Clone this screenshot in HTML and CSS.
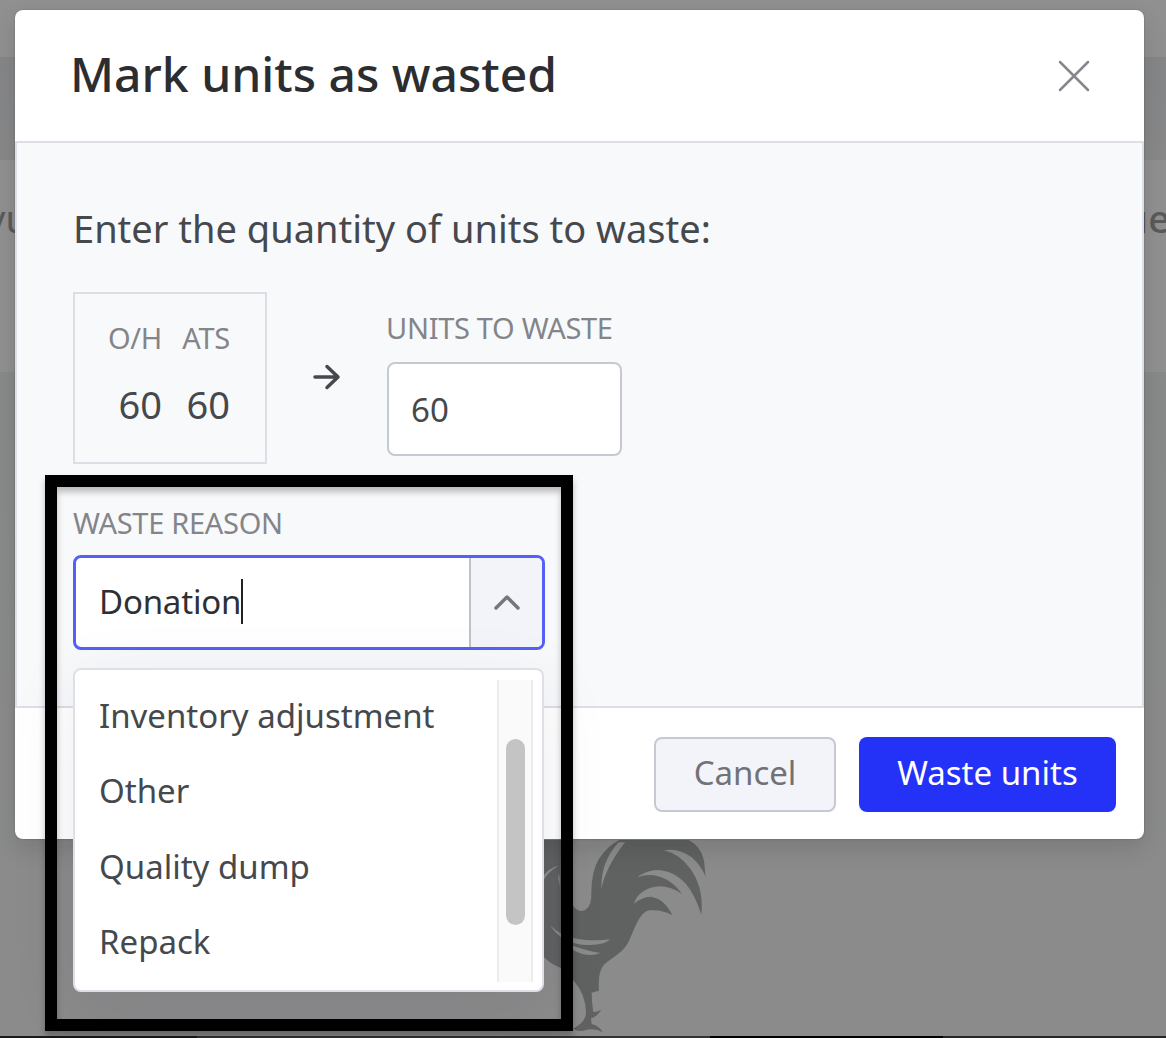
FILE: index.html
```
<!DOCTYPE html>
<html lang="en">
<head>
    <meta charset="UTF-8">
    <meta name="viewport" content="width=device-width, initial-scale=1.0">
    <title>Mark units as wasted</title>
    <link rel="stylesheet" href="styles.css">
</head>
<body>

<div class="page">
    <div class="page-top"></div>
    <div class="page-toolbar"></div>
    <div class="page-table">
        <span class="cell-left">yu</span>
        <span class="cell-right">ue</span>
    </div>
    <div class="page-gap"></div>
    <div class="page-main"></div>
    <div class="page-bottom">
        <div class="bottom-one"></div>
        <div class="bottom-two"></div>
        <div class="bottom-three"></div>
        <div class="bottom-four"></div>
    </div>
    <svg class="rooster" viewBox="0 0 600 654">
        <path fill="#606262" d="M0 60H62Q70 100 80 170Q85 272 125 273Q151 270 154 232Q152 155 178 115Q204 76 238 60H446Q484 80 492 122L497 170Q484 138 455 112Q416 82 372 91Q421 103 452 148C479 187 489 230 484 284Q466 226 438 192Q398 149 347 150Q313 154 292 172Q317 162 342 166Q392 174 426 222Q394 200 356 199C318 202 290 223 282 251Q305 231 332 230Q372 235 397 285Q364 268 329 271C300 275 287 319 268 361C252 397 216 413 192 434Q173 455 177 512L155 518Q155 545 160 576Q173 576 184 569Q171 590 153 595L155 612Q176 616 188 636Q163 624 139 630Q116 637 99 626Q136 607 138 580Q139 525 99 480L62 444Q26 430 0 398Z"/>
        <path fill="#8b8b8b" d="M236 67Q182 125 184 208Q195 145 255 67ZM30 315Q66 354 136 360Q180 362 210 358Q192 377 139 375Q63 371 30 315ZM95 376Q139 393 181 399Q159 409 130 403Q102 395 80 376ZM0 180Q29 139 57 137Q34 147 16 172Q6 190 0 194Z"/>
        <path fill="#8b8b8b" d="M58 160L60 200L54 175Z"/>
    </svg>
</div>

<div class="modal">
    <div class="modal-header">
        <h1>Mark units as wasted</h1>
        <svg class="close" viewBox="0 0 32 32">
            <path d="M2 2L30 30M30 2L2 30"/>
        </svg>
    </div>

    <div class="modal-body">
        <p class="intro">Enter the quantity of units to waste:</p>
        <div class="units">
            <div class="stock">
                <div class="stock-item">
                    <span class="label">O/H</span>
                    <span class="value">60</span>
                </div>
                <div class="stock-item">
                    <span class="label">ATS</span>
                    <span class="value">60</span>
                </div>
            </div>
            <svg class="arrow" viewBox="0 0 28 28">
                <path d="M2 14H25M14 3.5L25 14L14 24.5"/>
            </svg>
            <div class="field">
                <span class="label label-units">UNITS TO WASTE</span>
                <div class="input">60</div>
            </div>
        </div>

        <div class="reason">
            <span class="label label-reason">WASTE REASON</span>
            <div class="select">
                <div class="select-text"><span>Donation</span><i class="caret"></i></div>
                <div class="select-toggle">
                    <svg class="chevron" viewBox="0 0 26 16">
                        <path d="M2 14L13 3L24 14"/>
                    </svg>
                </div>
            </div>
            <div class="menu">
                <ul>
                    <li>Inventory adjustment</li>
                    <li>Other</li>
                    <li>Quality dump</li>
                    <li>Repack</li>
                </ul>
                <div class="scrollbar"><div class="thumb"></div></div>
            </div>
        </div>
    </div>

    <div class="modal-footer">
        <button class="cancel">Cancel</button>
        <button class="submit">Waste units</button>
    </div>
</div>

<div class="highlight"></div>

</body>
</html>
```
FILE: styles.css
```
* {
    box-sizing: border-box;
}
body {
    margin: 0;
    height: 1038px;
    overflow: hidden;
    position: relative;
    font-family: "Noto Sans", sans-serif;
    color: #45484c;
    background-color: #8b8b8b;
}
.page {
    height: 1038px;
    display: flex;
    flex-direction: column;
    position: relative;
}
.page-top {
    height: 57px;
    background-color: #909090;
}
.page-toolbar {
    height: 103px;
    background: linear-gradient(#858688, #888);
}
.page-table {
    height: 212px;
    padding-top: 34px;
    display: flex;
    justify-content: space-between;
    background-color: #909090;
    color: #5a5a5a;
    font-size: 38px;
    line-height: 48px;
}
.cell-left {
    margin-left: -14px;
}
.cell-right {
    margin-right: -4px;
    font-weight: 500;
}
.page-gap {
    height: 498px;
    background: linear-gradient(#888a8a, #8b8b8b);
}
.page-main {
    flex: 1;
    background-color: #8b8b8b;
}
.page-bottom {
    height: 2px;
    display: flex;
}
.bottom-one {
    width: 197px;
    background-color: #1a1a1c;
}
.bottom-two {
    width: 513px;
    background-color: #333335;
}
.bottom-three {
    width: 233px;
    background-color: #000;
}
.bottom-four {
    flex: 1;
    background-color: #262626;
}
.rooster {
    position: absolute;
    left: 540px;
    top: 820px;
    width: 200px;
    height: 218px;
}

/* modal */
.modal {
    position: absolute;
    left: 15px;
    top: 10px;
    width: 1129px;
    height: 829px;
    display: flex;
    flex-direction: column;
    background-color: #fff;
    border-radius: 8px;
    box-shadow: 0 10px 24px rgba(0, 0, 0, 0.12), 0 0 2px rgba(0, 0, 0, 0.25);
}
.modal-header {
    height: 131px;
    padding: 0 54px 0 55px;
    display: flex;
    justify-content: space-between;
    align-items: center;
}
h1 {
    margin: 0 0 4px;
    font-size: 48px;
    font-weight: 500;
    line-height: 60px;
    color: #2b2d31;
}
.close {
    width: 32px;
    height: 32px;
    fill: none;
    stroke: #85878d;
    stroke-width: 2.5;
    stroke-linecap: round;
}
.modal-body {
    height: 567px;
    padding: 59px 56px 0;
    background-color: #f8f9fb;
    border: 2px solid #dcdfe6;
}
.intro {
    margin: 0;
    font-size: 38px;
    line-height: 52px;
    white-space: nowrap;
}
.units {
    margin-top: 38px;
    display: flex;
}
.stock {
    width: 194px;
    height: 172px;
    padding: 24px 35px 0 33px;
    display: flex;
    justify-content: space-between;
    border: 2px solid #dcdee5;
}
.stock-item {
    display: flex;
    flex-direction: column;
    align-items: flex-end;
}
.label {
    font-size: 29px;
    line-height: 40px;
    letter-spacing: -0.3px;
    color: #83858a;
    white-space: nowrap;
}
.value {
    margin-top: 20px;
    font-size: 38px;
    line-height: 52px;
}
.arrow {
    width: 28px;
    height: 28px;
    margin: 71px 46px 0;
    fill: none;
    stroke: #45484c;
    stroke-width: 3.5;
    stroke-linecap: round;
    stroke-linejoin: round;
}
.field {
    padding-top: 16px;
    display: flex;
    flex-direction: column;
}
.label-units {
    margin-left: -1px;
}
.input {
    width: 235px;
    height: 94px;
    margin-top: 14px;
    padding-left: 22px;
    font-size: 33px;
    line-height: 91px;
    background-color: #fff;
    border: 2px solid #c6c9d1;
    border-radius: 8px;
}
.reason {
    width: 472px;
    margin-top: 39px;
    display: flex;
    flex-direction: column;
    position: relative;
}
.select {
    height: 95px;
    margin-top: 12px;
    display: flex;
    background-color: #fff;
    border: 3px solid #5560f7;
    border-radius: 8px;
    overflow: hidden;
}
.select-text {
    flex: 1;
    padding-left: 23px;
    padding-bottom: 2px;
    display: flex;
    align-items: center;
    font-size: 33px;
    line-height: 45px;
    letter-spacing: -0.2px;
    color: #2e3034;
}
.caret {
    width: 2px;
    height: 45px;
    background-color: #222;
}
.select-toggle {
    width: 73px;
    padding-bottom: 2px;
    display: flex;
    justify-content: center;
    align-items: center;
    background-color: #f3f4f9;
    border-left: 2px solid #bfc1c9;
}
.chevron {
    width: 26px;
    height: 16px;
    fill: none;
    stroke: #75777c;
    stroke-width: 3.5;
    stroke-linecap: round;
    stroke-linejoin: round;
}
.menu {
    position: absolute;
    left: 0;
    top: 165px;
    width: 471px;
    height: 324px;
    padding: 10px 9px 10px 24px;
    display: flex;
    justify-content: space-between;
    background-color: #fff;
    border: 2px solid #dde0e7;
    border-radius: 8px;
    box-shadow: 0 16px 70px rgba(20, 30, 70, 0.08);
}
ul {
    list-style: none;
    margin: 0;
    padding: 0;
}
li {
    height: 75.3px;
    font-size: 33px;
    line-height: 71px;
    white-space: nowrap;
}
.scrollbar {
    width: 36px;
    height: 302px;
    padding: 59px 7px 0 7px;
    background-color: #fafafa;
    border: solid #ececec;
    border-width: 0 2px;
}
.thumb {
    width: 19px;
    height: 186px;
    border-radius: 10px;
    background-color: #c4c4c4;
}
.modal-footer {
    flex: 1;
    padding: 29px 28px 0 0;
    display: flex;
    justify-content: flex-end;
    gap: 23px;
}
button {
    height: 75px;
    padding: 0 0 5px;
    font-family: inherit;
    font-size: 33px;
    border-radius: 8px;
}
.cancel {
    width: 182px;
    color: #707277;
    background-color: #f3f4f9;
    border: 2px solid #c6c9d1;
}
.submit {
    width: 257px;
    color: #fff;
    background-color: #2332f6;
    border: none;
}

/* frame around the waste reason select */
.highlight {
    position: absolute;
    left: 45px;
    top: 475px;
    width: 528px;
    height: 556px;
    border: 12px solid #000;
    filter: drop-shadow(0 5px 3px rgba(0, 0, 0, 0.25));
}
```
